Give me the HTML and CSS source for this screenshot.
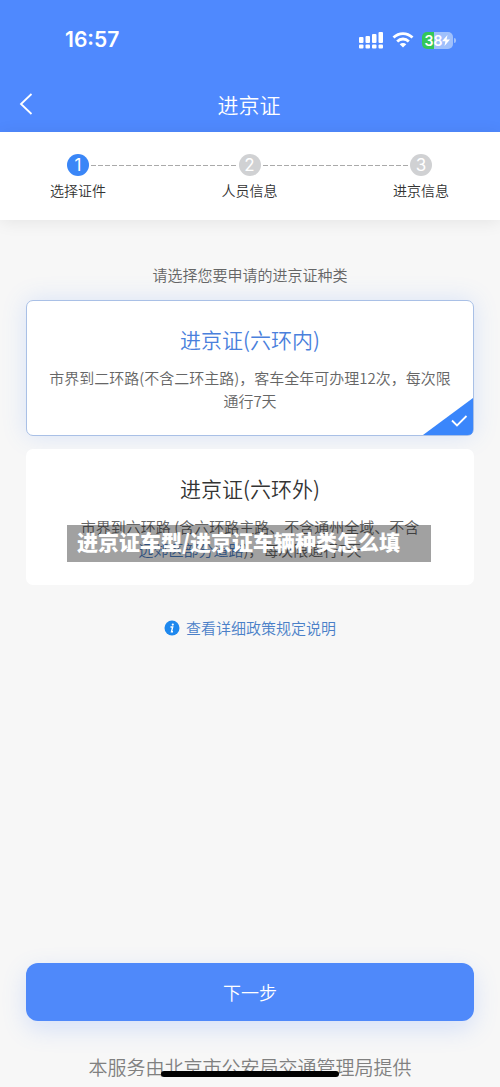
FILE: index.html
```html
<!DOCTYPE html>
<html lang="zh-CN">
<head>
<meta charset="utf-8">
<meta name="viewport" content="width=device-width, initial-scale=1">
<title>进京证</title>
<link rel="stylesheet" href="styles.css">
</head>
<body>
<div class="page">
  <header class="header">
    <div class="status">
      <span class="time">16:57</span>
      <div class="indicators">
        <svg class="signal" viewBox="0 0 26 18" fill="#fff" aria-hidden="true">
          <rect x="1" y="6" width="4.500" height="6" rx="1"/><rect x="7.500" y="5" width="4.500" height="7" rx="1"/><rect x="14" y="3" width="4.500" height="9" rx="1"/><rect x="20.500" y="1" width="4.500" height="11" rx="1"/>
          <rect x="1" y="13.500" width="4.500" height="4" rx="1"/><rect x="7.500" y="13.500" width="4.500" height="4" rx="1"/><rect x="14" y="13.500" width="4.500" height="4" rx="1"/><rect x="20.500" y="13.500" width="4.500" height="4" rx="1"/>
        </svg>
        <svg class="wifi" viewBox="0 0 22 16" fill="none" stroke="#fff" stroke-width="2.8" aria-hidden="true">
          <path d="M1.500 5.600C7 .3 15 .3 20.500 5.600"/><path d="M5.200 9.400C8.500 6.200 13.500 6.200 16.800 9.400"/><path d="M11 15.500L7.700 12.200C9.600 10.500 12.400 10.500 14.300 12.200Z" fill="#fff" stroke="none"/>
        </svg>
        <div class="battery">
          <span class="level">38</span>
          <svg class="bolt" viewBox="0 0 8 11" fill="#fff" aria-hidden="true"><path d="M5.500 0L0 6.200H3.400L2.500 11L8 4.600H4.600Z"/></svg>
        </div>
      </div>
    </div>
    <div class="navbar">
      <button class="back" type="button" aria-label="返回">
        <svg viewBox="0 0 14 22" fill="none" stroke="#fff" stroke-width="1.8" aria-hidden="true"><path d="M12.500 1L2 11L12.500 21"/></svg>
      </button>
      <h1 class="title">进京证</h1>
    </div>
  </header>

  <ol class="steps">
    <li class="step current"><span class="dot">1</span><span class="step-name">选择证件</span></li>
    <li class="connector" aria-hidden="true"></li>
    <li class="step"><span class="dot">2</span><span class="step-name">人员信息</span></li>
    <li class="connector" aria-hidden="true"></li>
    <li class="step"><span class="dot">3</span><span class="step-name">进京信息</span></li>
  </ol>

  <main class="content">
    <p class="hint">请选择您要申请的进京证种类</p>
    <div class="options">
      <div class="option">
        <input class="choice" type="radio" name="permit" id="inner" checked>
        <label class="card" for="inner">
          <span class="card-title">进京证(六环内)</span>
          <span class="card-text">市界到二环路(不含二环主路)，客车全年可办理12次，每次限通行7天</span>
          <svg class="corner" viewBox="0 0 50 37" aria-hidden="true"><path d="M0 37L50 0V32Q50 37 45 37Z" fill="#3a86fb"/><path d="M29 22.500L34 27.500L43.500 18" fill="none" stroke="#fff" stroke-width="1.800"/></svg>
        </label>
      </div>
      <div class="option">
        <input class="choice" type="radio" name="permit" id="outer">
        <label class="card" for="outer">
          <span class="card-title">进京证(六环外)</span>
          <span class="card-text">市界到六环路 (含六环路主路、不含通州全域、不含<span class="roads">远郊区部分道路</span>)，每次限通行7天</span>
        </label>
        <div class="banner">进京证车型/进京证车辆种类怎么填</div>
      </div>
    </div>
    <a class="policy" href="#">
      <svg class="info" viewBox="0 0 16 16" aria-hidden="true"><circle cx="8" cy="8" r="7.500" fill="#1e88ee"/><circle cx="8.800" cy="4.600" r="1.100" fill="#fff"/><path d="M6.500 7H8.700L7.500 11.700H9" fill="none" stroke="#fff" stroke-width="1.400"/></svg>
      <span>查看详细政策规定说明</span>
    </a>
  </main>

  <footer class="footer">
    <button class="next" type="button">下一步</button>
    <p class="provider">本服务由北京市公安局交通管理局提供</p>
    <div class="home-bar"></div>
  </footer>
</div>
</body>
</html>
```

FILE: styles.css
```css
* { box-sizing: border-box; }

body {
  margin: 0;
  background: #f7f7f7;
  color: #333;
  font-family: "Noto Sans CJK SC", sans-serif;
  font-weight: 350;
}

h1, p, ol { margin: 0; padding: 0; font-weight: inherit; }
button { font: inherit; border: 0; cursor: pointer; }

.page { display: flex; flex-direction: column; min-height: 100vh; }

.header { background: #4f89fe; color: #fff; }

.status {
  display: flex;
  align-items: center;
  justify-content: space-between;
  height: 80px;
  padding: 0 47px 0 65px;
}
.time { font: 600 21px/24px Inter, sans-serif; }
.indicators { display: flex; align-items: center; gap: 8px; }
.signal { width: 26px; height: 18px; }
.wifi { width: 22px; height: 16px; }
.battery {
  position: relative;
  display: flex;
  align-items: center;
  justify-content: center;
  width: 31px;
  height: 17px;
  border-radius: 5px;
  background: linear-gradient(90deg, #34c759 38%, #9fc0fc 38%);
}
.battery::after {
  content: "";
  position: absolute;
  top: 6px;
  left: 32px;
  width: 2px;
  height: 5px;
  border-radius: 0 2px 2px 0;
  background: #9fc0fc;
}
.level { font: 600 14px/17px Inter, sans-serif; }
.bolt { width: 8px; height: 11px; }

.navbar {
  display: grid;
  grid-template-columns: 1fr auto 1fr;
  align-items: center;
  height: 52px;
  padding: 0 19px 4px 17px;
}
.back { display: flex; justify-self: start; padding: 2px; background: none; }
.back svg { width: 14px; height: 22px; }
.title { font-size: 21px; line-height: 30px; }

.steps {
  display: flex;
  justify-content: space-between;
  height: 88px;
  padding: 22px 51px 0 50px;
  list-style: none;
  background: #fff;
  box-shadow: 0 2px 16px rgba(0, 0, 0, 0.08);
}
.step { display: flex; flex-direction: column; align-items: center; gap: 3px; }
.dot {
  width: 22px;
  height: 22px;
  border-radius: 50%;
  background: #d0d1d3;
  color: #fff;
  font: 400 17px/22px Inter, sans-serif;
  text-align: center;
}
.current .dot { background: #3a86f7; }
.step-name { font-size: 14px; line-height: 22px; }
.connector {
  flex: 1;
  height: 1px;
  margin: 11px -15px 0;
  background: repeating-linear-gradient(90deg, #aaa 0 5px, transparent 5px 7px);
}

.content {
  display: flex;
  flex: 1;
  flex-direction: column;
  align-items: center;
  padding: 44px 26px 0;
}
.hint { color: #666; font-size: 15px; line-height: 22px; }
.options { display: grid; gap: 13px; width: 100%; margin-top: 14px; }
.option { position: relative; }
.choice { position: absolute; opacity: 0; }
.card {
  position: relative;
  display: flex;
  flex-direction: column;
  align-items: center;
  gap: 12px;
  padding: 23px 20px;
  border: 1px solid transparent;
  border-radius: 7px;
  background: #fff;
  text-align: center;
  cursor: pointer;
}
.choice:checked + .card {
  border-color: #a9c0e6;
  box-shadow: 0 0 24px rgba(79, 137, 254, 0.18);
}
.card-title { font-size: 21px; line-height: 30px; }
.choice:checked + .card .card-title { color: #4a80dc; }
.card-text { color: #666; font-size: 15px; line-height: 23px; }
.roads { display: inline-block; color: #4a80c8; }
.corner { position: absolute; right: 0; bottom: 0; width: 50px; height: 37px; }

.banner {
  position: absolute;
  top: 76px;
  left: 41px;
  right: 43px;
  padding: 0 10px 4px;
  background: rgba(0, 0, 0, 0.37);
  color: #fff;
  font-size: 21px;
  font-weight: 900;
  line-height: 33px;
  white-space: nowrap;
}

.policy {
  display: flex;
  align-items: center;
  gap: 6px;
  margin-top: 32px;
  color: #4a80c8;
  font-size: 15px;
  line-height: 22px;
  text-decoration: none;
}
.info { width: 16px; height: 16px; }

.footer { position: relative; padding: 0 26px 6px; text-align: center; }
.next {
  width: 100%;
  height: 58px;
  border-radius: 12px;
  background: #4f89fa;
  box-shadow: 0 8px 24px rgba(79, 137, 254, 0.2);
  color: #fff;
  font-size: 18px;
}
.provider { margin-top: 32px; color: #808080; font-size: 19px; line-height: 28px; }
.home-bar {
  position: absolute;
  bottom: 10px;
  left: 50%;
  width: 178px;
  height: 6px;
  margin-left: -89px;
  border-radius: 3px;
  background: #000;
}
```
